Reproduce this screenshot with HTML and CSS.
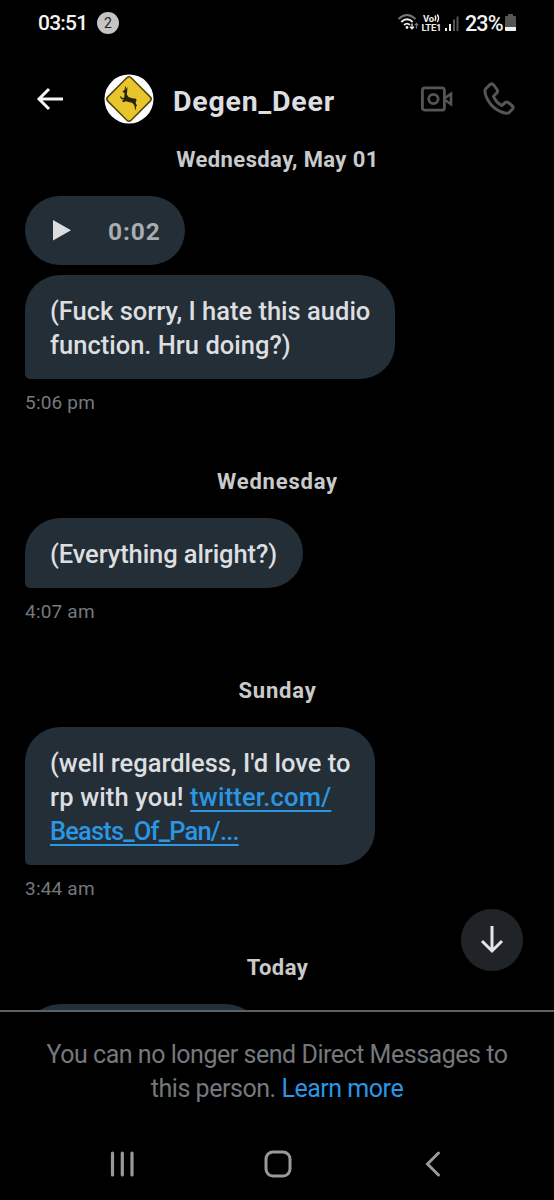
FILE: index.html
```html
<!DOCTYPE html>
<html lang="en">
<head>
<meta charset="utf-8">
<title>Degen_Deer</title>
<link rel="stylesheet" href="styles.css">
</head>
<body>
<div class="phone">
  <div class="status">
    <span class="clock">03:51</span>
    <span class="count">2</span>
    <svg class="signals" width="64" height="20" viewBox="0 0 64 20">
      <g fill="none" stroke-width="1.800">
        <path stroke="#777" d="M.5 6Q9-2 17.500 6"/>
        <path stroke="#eee" d="M3.300 9Q9 3.500 14.700 9M6 12Q9 9.300 12 12"/>
      </g>
      <circle cx="9" cy="14.500" r="1.400" fill="#eee"/>
      <path d="M14 10.500v5m-2 -1.800 2 2.100 2-2.100" fill="none" stroke="#eee" stroke-width="1.300"/>
      <path d="M18.500 15.500V10.500m-1.800 1.800 1.800-2 1.800 2" fill="none" stroke="#777" stroke-width="1.200"/>
      <text class="volte" x="25" y="8.700" textLength="11">Vo</text>
      <path d="M37 2.500q1.600 2.500 0 5.500M39.300 1.500q2.500 3.700 0 7.500" fill="none" stroke="#eee" stroke-width="1.400"/>
      <text class="volte" x="23.500" y="17.800" textLength="20">LTE1</text>
      <path d="M47 15h2v3h-2zM51 11h2v7h-2z" fill="#eee"/>
      <path d="M55 6.500h2V18h-2zM58.500 3.500h2V18h-2z" fill="#555"/>
    </svg>
    <span class="percent">23%</span>
    <svg class="battery" width="11" height="17" viewBox="0 0 11 17">
      <path d="M3 0h5v2h2q1 0 1 1v13q0 1-1 1H1q-1 0-1-1V3q0-1 1-1h2z" fill="#555"/>
      <path d="M0 13h11v3q0 1-1 1H1q-1 0-1-1z" fill="#f2f2f2"/>
    </svg>
  </div>
  <div class="header">
    <svg class="back" width="28" height="24" viewBox="0 0 28 24">
      <path d="M27 12H3M13 2 3 12l10 10" fill="none" stroke="#f4f4f4" stroke-width="3"/>
    </svg>
    <svg class="avatar" width="50" height="50" viewBox="0 0 50 50">
      <circle cx="25" cy="25" r="24.500" fill="#fff"/>
      <rect x="8.500" y="8.500" width="33" height="33" rx="3" transform="rotate(45 25 25)" fill="#e8c52b" stroke="#54430f" stroke-width="1.500"/>
      <path d="M22 12.500 21.600 15.500 23.500 13 23.200 17.500 22.800 20.500 24.500 23 29 24.500 31.500 24.500 32.600 26 31.600 29 33 31.500 31.800 33 32.200 37 30.700 34 30.500 31.500 28 28.800 24.500 28 22.200 27.300 19 28.200 18 26.500 20.300 25.800 17 25 16 22.500 17 22.300 18 24 20.300 23.500 20.500 19 18.200 17.800 20.500 16 21 12.700Z" fill="#29230d"/>
    </svg>
    <h1 class="name">Degen_Deer</h1>
    <svg class="video" width="32" height="26" viewBox="0 0 32 26">
      <g fill="none" stroke="#555" stroke-width="2.800">
        <rect x="1.400" y="1.800" width="22" height="22.400" rx="2.500"/>
        <circle cx="12.400" cy="13" r="4.700"/>
        <path stroke-width="2.600" d="M24 12 30 7.800v10.400L24 14"/>
      </g>
    </svg>
    <svg class="call" width="32" height="34" viewBox="0 0 32 34">
      <path d="M2.300 7.300 7 2.500Q9 1 10.800 3L14.300 8Q15 9.700 13.700 11L10.500 14.300Q13 20.300 18.700 23.500L22.300 20.500Q23.700 19.500 25.200 20.500L29.500 24Q30.800 25.500 29.500 27L25.700 31Q23.700 32 18.500 30Q9.500 26.500 4.800 18Q1 11 2.300 7.300Z" fill="none" stroke="#555" stroke-width="3" stroke-linejoin="round"/>
    </svg>
  </div>
  <div class="chat">
    <div class="day first">Wednesday, May 01</div>
    <div class="voice">
      <svg width="18" height="21" viewBox="0 0 18 21"><path d="M0 0 18 10.300 0 20.600z" fill="#dcdddf"/></svg>
      <span>0:02</span>
    </div>
    <div class="bubble b1"><span class="l1">(Fuck sorry, I hate this audio</span><br><span class="l2">function. Hru doing?)</span></div>
    <div class="time">5:06 pm</div>
    <div class="day wed">Wednesday</div>
    <div class="bubble b2"><span class="l3">(Everything alright?)</span></div>
    <div class="time">4:07 am</div>
    <div class="day sun">Sunday</div>
    <div class="bubble b3"><span class="l4">(well regardless, I'd love to</span><br><span class="l5">rp with you! </span><a class="link l6">twitter.com/</a><br><a class="link l7">Beasts_Of_Pan/...</a></div>
    <div class="time">3:44 am</div>
    <div class="day">Today</div>
    <div class="bubble b4"></div>
    <div class="jump">
      <svg width="24" height="28" viewBox="0 0 24 28"><path d="M12 0v25M2 15l10 10 10-10" fill="none" stroke="#e4e5e6" stroke-width="3"/></svg>
    </div>
  </div>
  <div class="notice"><span class="n1">You can no longer send Direct Messages to</span><br><span class="n2">this person. <a>Learn more</a></span></div>
  <div class="nav">
    <svg width="24" height="28" viewBox="0 0 24 28"><path d="M2.500 3v22M12.300 3v22M22 3v22" stroke="#999" stroke-width="3.200" stroke-linecap="round"/></svg>
    <svg class="home" width="28" height="28" viewBox="0 0 28 28"><rect x="2" y="2" width="24" height="24" rx="7" fill="none" stroke="#999" stroke-width="3"/></svg>
    <svg width="16" height="28" viewBox="0 0 16 28"><path d="M13.500 3 2.500 14l11 11" fill="none" stroke="#999" stroke-width="3" stroke-linecap="round"/></svg>
  </div>
</div>
</body>
</html>
```
FILE: styles.css
```css
* { box-sizing: border-box; }
body { margin: 0; background: #000; }
svg { display: block; flex: none; }
.phone {
  width: 554px; height: 1200px; overflow: hidden;
  display: flex; flex-direction: column;
  background: #000; color: #dcdee0;
  font-family: Roboto, "Liberation Sans", sans-serif;
  white-space: nowrap;
}
.status { height: 46px; padding: 0 38px; display: flex; align-items: center; color: #f4f4f4; flex: none; }
.clock { font-size: 21px; width: 49px; font-weight: 500; letter-spacing: -0.8px; }
.count {
  width: 22px; height: 22px; margin-left: 10px; border-radius: 50%;
  background: #c4c4c4; color: #222; font-size: 14px; line-height: 22px; text-align: center;
}
.signals { margin-left: 279px; }
.volte { font-size: 9.500px; font-weight: 700; fill: #eee; }
.percent { margin-left: 3px; width: 40px; font-size: 21.500px; font-weight: 500; letter-spacing: -0.9px; }
.battery { margin-top: -1px; }
.header { height: 100px; padding: 6px 39px 0 36px; display: flex; align-items: center; flex: none; margin-bottom: -3px; }
.avatar { margin-left: 40px; }
.name { margin: 6px 0 0 19px; width: 248px; font-size: 28.500px; font-weight: 700; letter-spacing: 0.8px; line-height: 34px; }
.call { margin-left: 30px; }
.chat { height: 867px; flex: none; overflow: hidden; padding-left: 25px; position: relative; }
.day { margin: 0 0 0 -25px; width: 554px; padding-left: 1px; text-align: center; font-size: 22px; line-height: 30px; font-weight: 700; color: #c9cacb; letter-spacing: 0.4px; }
.first { padding-top: 2px; }
.wed { letter-spacing: 0.8px; }
.sun { letter-spacing: 0.8px; }
.time { margin-top: 10px; margin-bottom: 50px; height: 28px; font-size: 19px; line-height: 28px; color: #75787c; letter-spacing: 0.2px; }
.voice {
  width: 160px; height: 69px; border-radius: 35px; background: #242e36; margin: 21px 0 10px;
  padding-left: 28px; display: flex; align-items: center; gap: 37px;
  color: #a9adb2; font-size: 24.500px; font-weight: 700; letter-spacing: 0.9px;
}
.voice span { padding-top: 2px; }
.bubble {
  background: #242e36; border-radius: 35px 35px 35px 5px; padding: 19px 0 0 25px;
  font-size: 25.500px; line-height: 34px; font-weight: 500; margin-top: 21px;
}
.b1 { width: 370px; height: 104px; margin-top: 0; }
.b2 { width: 278px; height: 70px; }
.b3 { width: 350px; height: 138px; }
.b4 { width: 236px; height: 70px; }
.l3 { letter-spacing: -0.1px; }
.l5 { letter-spacing: 0.15px; }
.l6 { letter-spacing: 0.2px; }
.l7 { letter-spacing: -0.84px; }
.link { color: #2a96e4; text-decoration: underline; text-decoration-thickness: 2px; text-underline-offset: 4px; text-decoration-skip-ink: none; }
.jump {
  position: absolute; left: 461px; top: 766px; width: 62px; height: 62px; border-radius: 50%;
  background: #202327; display: flex; align-items: center; justify-content: center;
}
.notice {
  border-top: 2px solid #5b6064; height: 118px; flex: none; padding-top: 26px; text-align: center;
  font-size: 25px; line-height: 34px; color: #75787c;
}
.n1 { letter-spacing: -0.47px; }
.n2 { letter-spacing: -0.47px; }
.notice a { color: #2a96e4; }
.nav { height: 72px; padding: 0 113px 0 110px; display: flex; align-items: center; justify-content: space-between; flex: none; }
.home { margin-right: 4px; }
```
